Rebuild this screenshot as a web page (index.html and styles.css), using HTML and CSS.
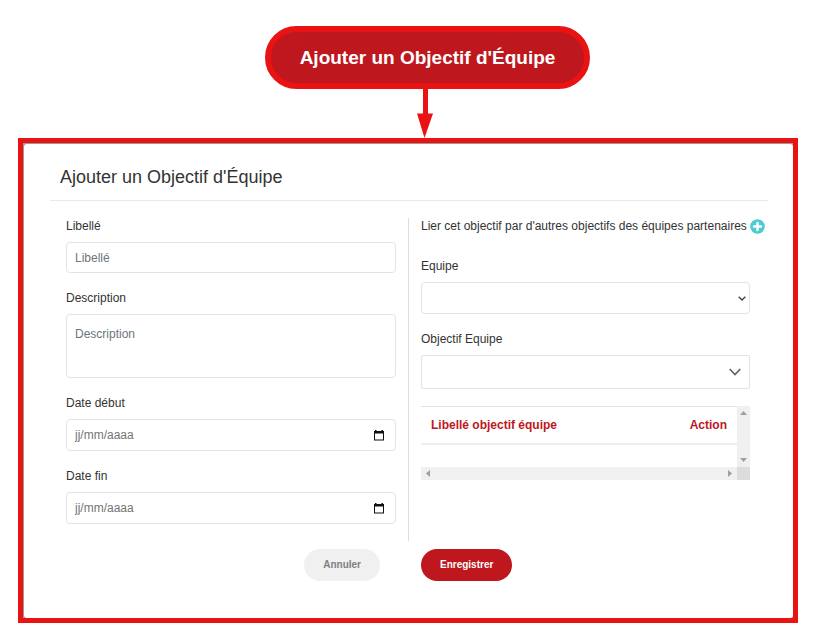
FILE: index.html
```html
<!DOCTYPE html>
<html lang="fr">
<head>
<meta charset="utf-8">
<title>Ajouter un Objectif d'Équipe</title>
<link rel="stylesheet" href="styles.css">
</head>
<body>
<header class="callout">
  <div class="callout-label">Ajouter un Objectif d'Équipe</div>
  <svg class="callout-arrow" width="16" height="49" viewBox="0 0 16 49" aria-hidden="true">
    <path d="M6 0h5v24.500h5L7.500 49 0 24.500h6z" fill="#e91313"/>
  </svg>
</header>
<main class="frame">
  <form class="dialog">
    <h1 class="title">Ajouter un Objectif d'Équipe</h1>
    <div class="columns">
      <div class="column">
        <div class="field">
          <label for="libelle">Libellé</label>
          <input class="control short" id="libelle" type="text" placeholder="Libellé">
        </div>
        <div class="field">
          <label for="description">Description</label>
          <textarea class="control area" id="description" placeholder="Description"></textarea>
        </div>
        <div class="field">
          <label for="debut">Date début</label>
          <div class="control-wrap">
            <input class="control date" id="debut" type="text" placeholder="jj/mm/aaaa">
            <svg class="calendar" width="10" height="11" viewBox="0 0 10 11" aria-hidden="true"><path fill="#111" fill-rule="evenodd" d="M1 0h1.500v1h5V0H9v1h1v9.500H0V1h1zM1 3.500v6h8v-6z"/></svg>
          </div>
        </div>
        <div class="field">
          <label for="fin">Date fin</label>
          <div class="control-wrap">
            <input class="control date" id="fin" type="text" placeholder="jj/mm/aaaa">
            <svg class="calendar" width="10" height="11" viewBox="0 0 10 11" aria-hidden="true"><path fill="#111" fill-rule="evenodd" d="M1 0h1.500v1h5V0H9v1h1v9.500H0V1h1zM1 3.500v6h8v-6z"/></svg>
          </div>
        </div>
      </div>
      <div class="column column-right">
        <div class="link-row">
          <span>Lier cet objectif par d'autres objectifs des équipes partenaires</span>
          <button class="add" type="button" aria-label="Ajouter">
            <svg width="15" height="15" viewBox="0 0 15 15" aria-hidden="true"><circle cx="7.500" cy="7.500" r="7.300" fill="#4ecbce"/><path d="M7.500 4v7M4 7.500h7" stroke="#fff" stroke-width="2.400" stroke-linecap="round"/></svg>
          </button>
        </div>
        <div class="field">
          <label for="equipe">Equipe</label>
          <div class="control-wrap">
            <select class="control" id="equipe"><option></option></select>
            <svg class="chevron" width="8" height="5" viewBox="0 0 8 5" aria-hidden="true"><path d="M.7.700 4 4 7.300.700" fill="none" stroke="#444" stroke-width="1.400"/></svg>
          </div>
        </div>
        <div class="field">
          <label for="objectif">Objectif Equipe</label>
          <div class="control-wrap">
            <select class="control tall" id="objectif"><option></option></select>
            <svg class="chevron large" width="12" height="8" viewBox="0 0 12 8" aria-hidden="true"><path d="M.7 1 6 6.500 11.300 1" fill="none" stroke="#5a6570" stroke-width="1.700"/></svg>
          </div>
        </div>
        <div class="scroller">
          <table>
            <thead><tr><th>Libellé objectif équipe</th><th class="action">Action</th></tr></thead>
            <tbody><tr><td colspan="2"></td></tr></tbody>
          </table>
          <div class="bar bar-y" aria-hidden="true">
            <svg width="7" height="4" viewBox="0 0 7 4"><path d="M0 4 3.500 0 7 4z" fill="#a0a0a0"/></svg>
            <svg width="7" height="4" viewBox="0 0 7 4"><path d="M0 0 3.500 4 7 0z" fill="#a0a0a0"/></svg>
          </div>
          <div class="bar bar-x" aria-hidden="true">
            <svg width="4" height="7" viewBox="0 0 4 7"><path d="M4 0 0 3.500 4 7z" fill="#a0a0a0"/></svg>
            <svg width="4" height="7" viewBox="0 0 4 7"><path d="M0 0 4 3.500 0 7z" fill="#a0a0a0"/></svg>
          </div>
          <div class="corner"></div>
        </div>
      </div>
    </div>
    <div class="actions">
      <div class="cancel-cell"><button class="btn cancel" type="button">Annuler</button></div>
      <div class="save-cell"><button class="btn save" type="submit">Enregistrer</button></div>
    </div>
  </form>
</main>
</body>
</html>
```
FILE: styles.css
```css
* { box-sizing: border-box; }
body {
  margin: 0;
  padding: 26px 17px 16px 18px;
  background: #fff;
  color: #333;
  font: 12px/16px "Liberation Sans", Arial, sans-serif;
}
svg { display: block; }
input, textarea, select, button { font: inherit; }

.callout {
  display: flex;
  flex-direction: column;
  align-items: center;
  padding-left: 39px;
}
.callout-label {
  padding: 14px 29px 13px;
  border: 6px solid #e91313;
  border-radius: 32px;
  background: #be181e;
  color: #fff;
  font-size: 19px;
  font-weight: 700;
  line-height: 24px;
}
.callout-arrow { margin-right: 6px; }

.frame { border: 5px solid #e91313; background: #999; }
.dialog {
  margin: 1px 0 0 1px;
  padding: 16px 25px 37px 26px;
  border-radius: 3px;
  background: #fff;
}
.title {
  margin: 0;
  padding: 5px 10px 11px;
  border-bottom: 1px solid #e9e9e9;
  font-size: 18px;
  font-weight: 400;
  line-height: 24px;
}
.columns {
  display: grid;
  grid-template-columns: repeat(2, minmax(0, 1fr));
  padding: 17px 18px 0 16px;
}
.column {
  display: flex;
  flex-direction: column;
  gap: 17px;
  padding: 0 12px 17px 0;
}
.column-right {
  padding: 0 0 0 12px;
  border-left: 1px solid #dcdce2;
}
.field { display: flex; flex-direction: column; gap: 8px; }
.control-wrap { position: relative; }
.control {
  display: block;
  width: 100%;
  height: 32px;
  margin: 0;
  padding: 0 8px;
  border: 1px solid #e1e3e5;
  border-radius: 4px;
  background: #fff;
  color: #333;
  appearance: none;
  outline: none;
}
.control::placeholder { color: #6c757d; opacity: 1; }
.short { height: 31px; }
.area { height: 64px; padding-top: 11px; resize: none; }
.control.date::placeholder { color: #757575; }
.tall { height: 34px; border-radius: 2px; }
.calendar, .chevron {
  position: absolute;
  top: 0;
  bottom: 0;
  margin: auto 0;
  pointer-events: none;
}
.calendar { right: 12px; }
.chevron { right: 4px; }
.large { right: 9px; }

.link-row {
  display: flex;
  gap: 3px;
  margin-bottom: 7px;
  white-space: nowrap;
}
.add { padding: 0; border: 0; background: none; cursor: pointer; }

.scroller {
  display: grid;
  grid-template: 61px 13px / 1fr 13px;
}
table { width: 100%; border-collapse: collapse; align-self: start; border-top: 1px solid #dee2e6; }
th {
  height: 37px;
  padding: 0 10px;
  border-bottom: 2px solid #eee;
  color: #be181e;
  text-align: left;
}
th.action { text-align: right; }
td { padding: 0; }
.bar { display: flex; align-items: center; justify-content: space-between; background: #f0f0f0; }
.bar-y { flex-direction: column; padding: 5px 0; }
.bar-x { padding: 0 5px; }
.corner { background: #dcdcdc; }

.actions {
  display: grid;
  grid-template-columns: 1fr 1fr;
  padding: 8px 18px 0 16px;
}
.cancel-cell { display: flex; justify-content: flex-end; padding-right: 28px; }
.save-cell { padding-left: 13px; }
.btn {
  height: 32px;
  padding: 0 19px;
  border: 0;
  border-radius: 16px;
  font-size: 10px;
  font-weight: 700;
  cursor: pointer;
}
.cancel { background: #f0f0f0; color: #808080; }
.save { background: #be181e; color: #fff; }
```
